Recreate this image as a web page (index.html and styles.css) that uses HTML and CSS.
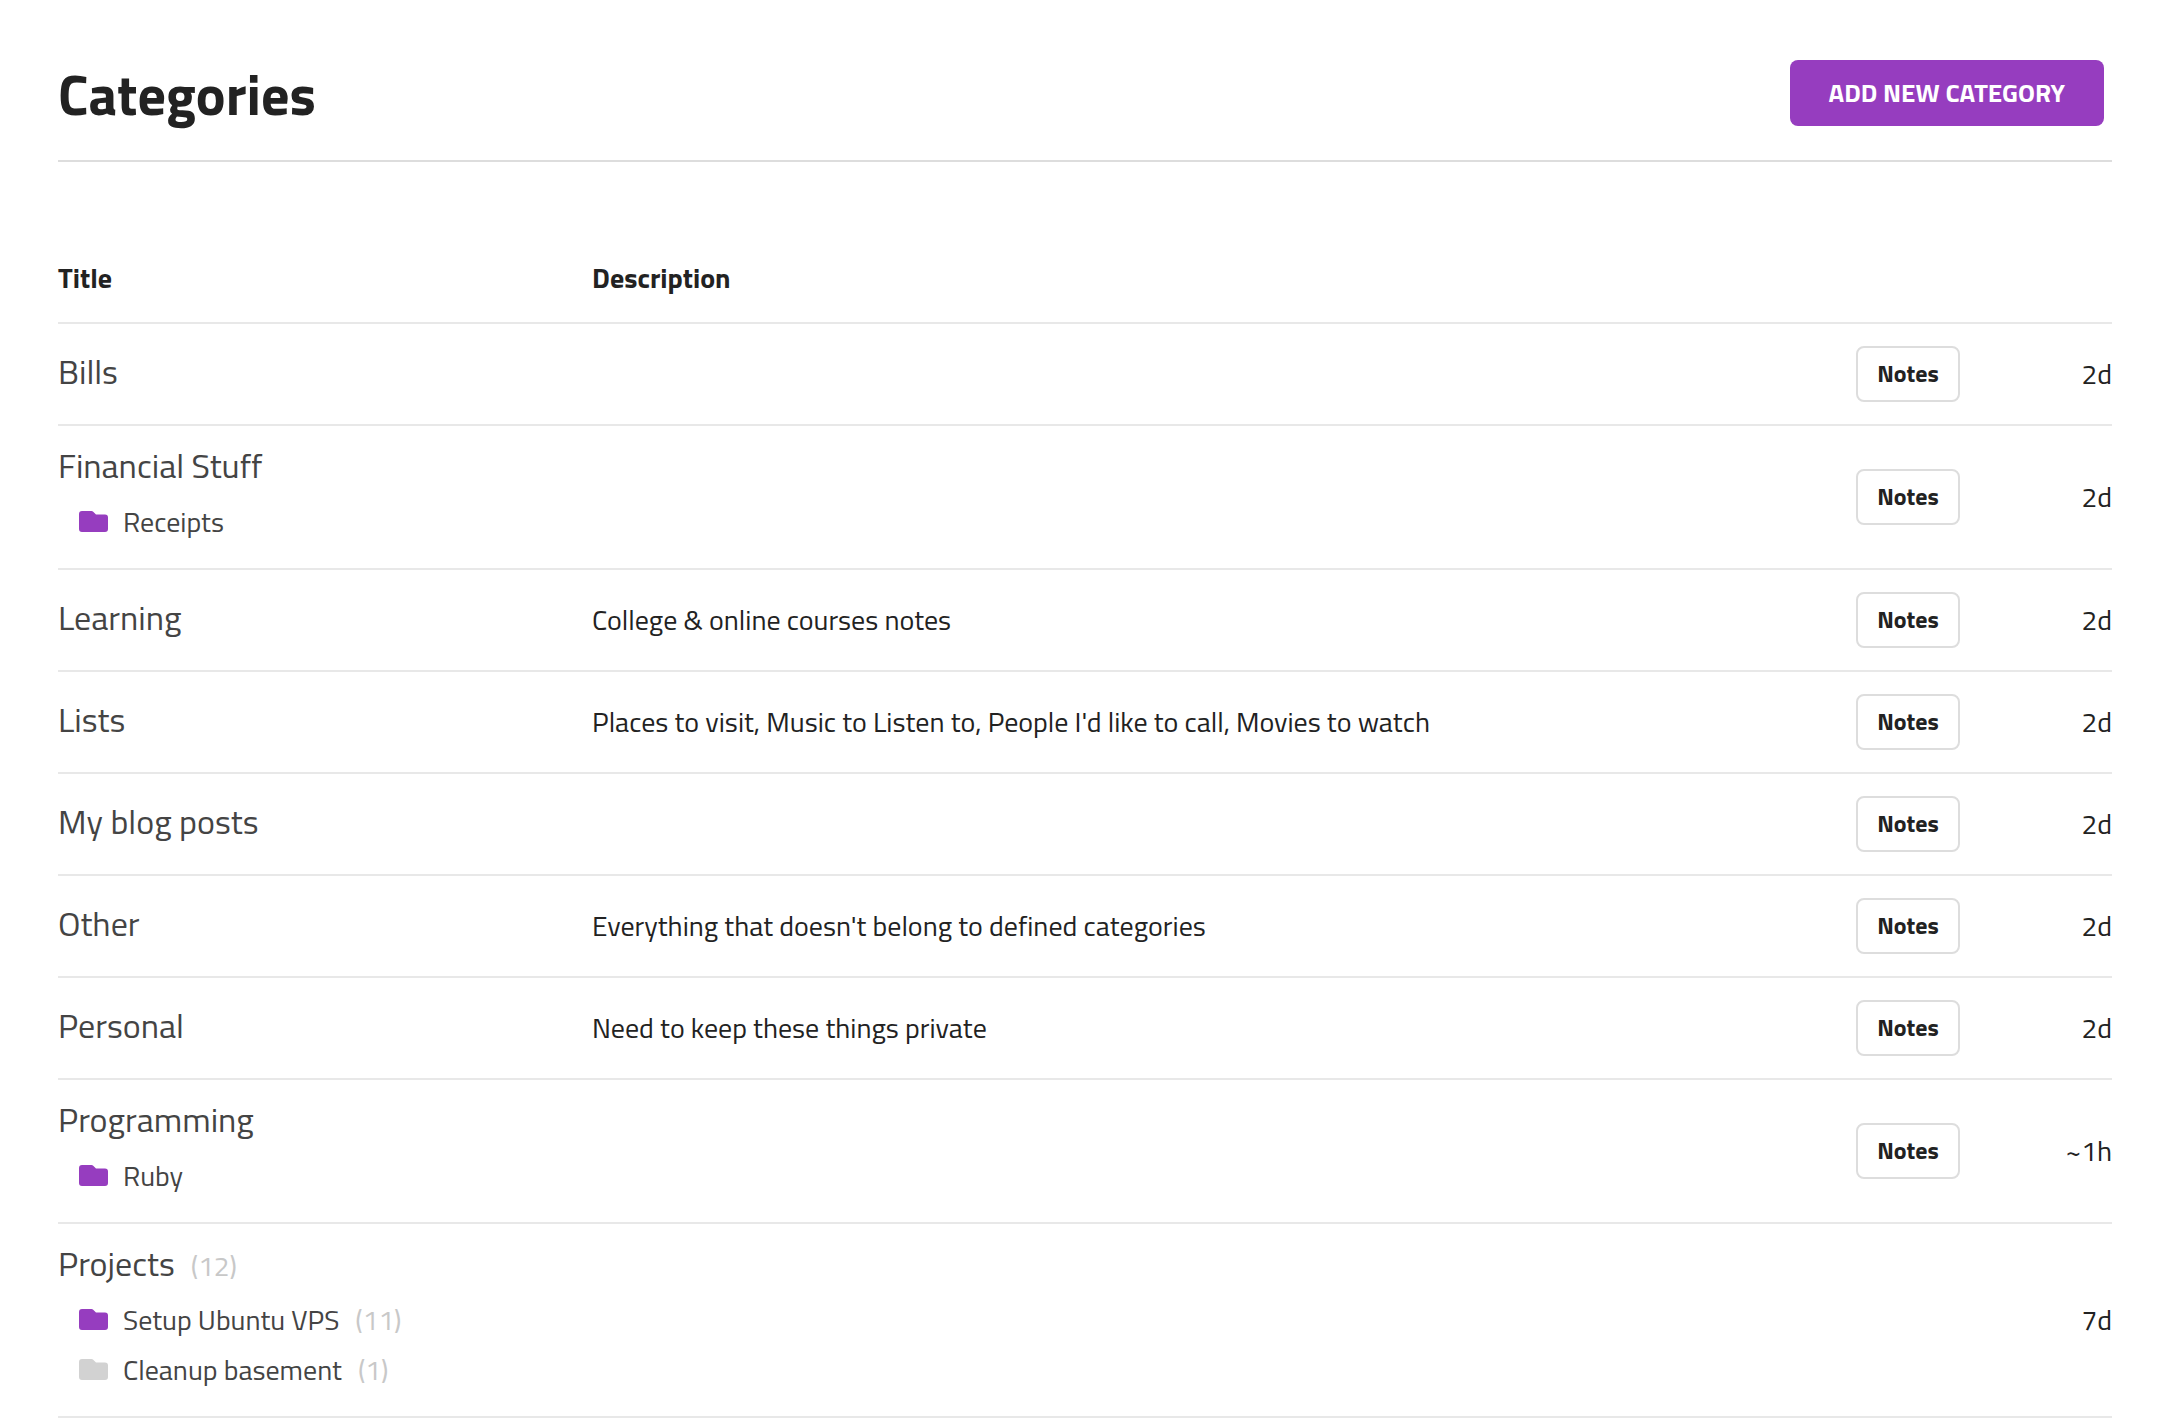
FILE: index.html
```html
<!DOCTYPE html>
<html lang="en">
<head>
<meta charset="utf-8">
<title>Categories</title>
<link rel="stylesheet" href="styles.css">
</head>
<body>
<svg class="sprite" aria-hidden="true">
  <symbol id="folder" viewBox="0 0 29 21">
    <path d="M3 0h9.500q1 0 1.700.7l2.800 2.800h9q3 0 3 3V18q0 3-3 3H3q-3 0-3-3V3q0-3 3-3z"/>
  </symbol>
</svg>
<main class="page">
  <header class="page-header">
    <h1 class="page-title">Categories</h1>
    <button class="add-button" type="button">ADD NEW CATEGORY</button>
  </header>
  <table class="categories">
    <colgroup><col class="col-title"><col><col class="col-notes"><col class="col-time"></colgroup>
    <thead>
      <tr><th scope="col">Title</th><th scope="col">Description</th><td></td><td></td></tr>
    </thead>
    <tbody>
      <tr>
        <td class="name"><div class="line"><a class="title" href="#">Bills</a></div></td>
        <td></td>
        <td><button class="notes" type="button">Notes</button></td>
        <td class="time">2d</td>
      </tr>
      <tr>
        <td class="name"><div class="line"><a class="title" href="#">Financial Stuff</a></div>
          <ul class="subs"><li class="line"><svg class="folder"><use href="#folder"/></svg><a href="#">Receipts</a></li></ul></td>
        <td></td>
        <td><button class="notes" type="button">Notes</button></td>
        <td class="time">2d</td>
      </tr>
      <tr>
        <td class="name"><div class="line"><a class="title" href="#">Learning</a></div></td>
        <td>College &amp; online courses notes</td>
        <td><button class="notes" type="button">Notes</button></td>
        <td class="time">2d</td>
      </tr>
      <tr>
        <td class="name"><div class="line"><a class="title" href="#">Lists</a></div></td>
        <td>Places to visit, Music to Listen to, People I'd like to call, Movies to watch</td>
        <td><button class="notes" type="button">Notes</button></td>
        <td class="time">2d</td>
      </tr>
      <tr>
        <td class="name"><div class="line"><a class="title" href="#">My blog posts</a></div></td>
        <td></td>
        <td><button class="notes" type="button">Notes</button></td>
        <td class="time">2d</td>
      </tr>
      <tr>
        <td class="name"><div class="line"><a class="title" href="#">Other</a></div></td>
        <td>Everything that doesn't belong to defined categories</td>
        <td><button class="notes" type="button">Notes</button></td>
        <td class="time">2d</td>
      </tr>
      <tr>
        <td class="name"><div class="line"><a class="title" href="#">Personal</a></div></td>
        <td>Need to keep these things private</td>
        <td><button class="notes" type="button">Notes</button></td>
        <td class="time">2d</td>
      </tr>
      <tr>
        <td class="name"><div class="line"><a class="title" href="#">Programming</a></div>
          <ul class="subs"><li class="line"><svg class="folder"><use href="#folder"/></svg><a href="#">Ruby</a></li></ul></td>
        <td></td>
        <td><button class="notes" type="button">Notes</button></td>
        <td class="time">~1h</td>
      </tr>
      <tr>
        <td class="name"><div class="line"><a class="title" href="#">Projects</a><span class="count">(12)</span></div>
          <ul class="subs">
            <li class="line"><svg class="folder"><use href="#folder"/></svg><a href="#">Setup Ubuntu VPS</a><span class="count">(11)</span></li>
            <li class="line"><svg class="folder muted"><use href="#folder"/></svg><a href="#">Cleanup basement</a><span class="count">(1)</span></li>
          </ul></td>
        <td></td>
        <td></td>
        <td class="time">7d</td>
      </tr>
    </tbody>
  </table>
</main>
</body>
</html>
```
FILE: styles.css
```css
* {
  box-sizing: border-box;
}

body {
  margin: 0;
  background: #fff;
  color: #222;
  font: 28px/40px "Titillium Web", Roboto, sans-serif;
}

.sprite {
  display: none;
}

.page {
  padding: 60px 58px 0;
}

.page-header {
  display: flex;
  justify-content: space-between;
  align-items: flex-start;
  padding-bottom: 30px;
  border-bottom: 2px solid #ddd;
}

.page-title {
  margin: 0;
  font-size: 56px;
  line-height: 70px;
  font-weight: 700;
}

.add-button {
  height: 66px;
  margin-right: 8px;
  padding: 0 39px;
  border: 0;
  border-radius: 8px;
  background: #963dbf;
  color: #fff;
  font: 700 26px/40px "Titillium Web", Roboto, sans-serif;
}

.categories {
  width: 100%;
  margin-top: 72px;
  border-spacing: 0;
  table-layout: fixed;
}

.col-title {
  width: 26%;
}

.col-notes {
  width: 156px;
}

.col-time {
  width: 100px;
}

th,
td {
  padding: 22px 0;
  border-bottom: 2px solid #e8e8e8;
  text-align: left;
  vertical-align: middle;
}

th {
  padding: 24px 0;
  font-weight: 700;
}

.name {
  padding: 14px 0 21px;
  color: #444;
}

.name a {
  color: inherit;
  text-decoration: none;
}

.line {
  display: flex;
  align-items: baseline;
  line-height: 50px;
}

.title {
  font-size: 34px;
}

.count {
  margin-left: 16px;
  line-height: 40px;
  color: #c8c8c8;
}

.subs {
  margin: 7px 0 0;
  padding: 0 0 0 21px;
  list-style: none;
}

.folder {
  width: 29px;
  height: 21px;
  margin-right: 15px;
  fill: #963dbf;
}

.folder.muted {
  fill: #d2d2d2;
}

.notes {
  display: block;
  width: 104px;
  height: 56px;
  padding: 0 0 2px;
  border: 2px solid #ddd;
  border-radius: 8px;
  background: #fff;
  color: #222;
  font: 700 24px/40px "Titillium Web", Roboto, sans-serif;
}

.time {
  text-align: right;
}
```
